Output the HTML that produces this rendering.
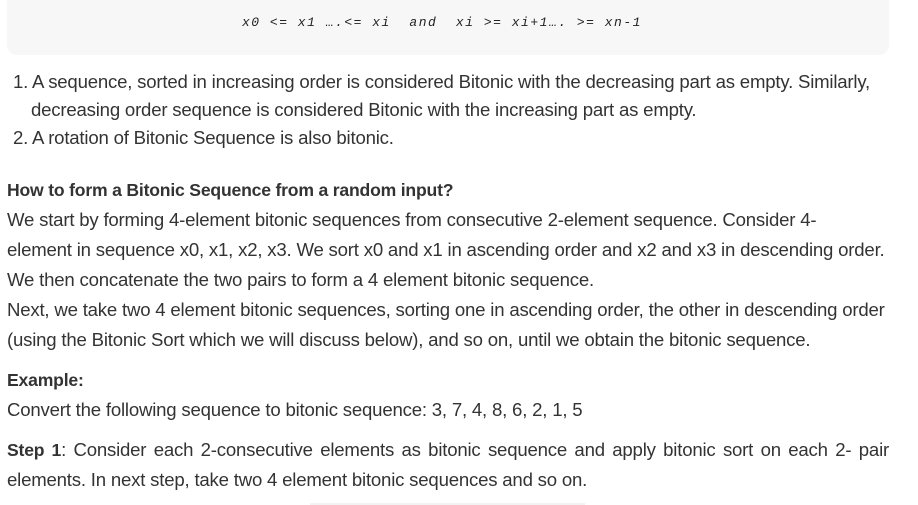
<!DOCTYPE html>
<html><head><meta charset="utf-8"><style>
body{margin:0;width:918px;height:505px;background:#fff;overflow:hidden;position:relative;font-family:"Liberation Sans",sans-serif;color:#333;}
.l{position:absolute;white-space:nowrap;font-size:18.6px;line-height:20px;letter-spacing:-0.2px;}
.code{position:absolute;left:7px;top:-10px;width:882px;height:65px;background:#f7f7f8;border-radius:10px;}
.mono{position:absolute;left:242px;top:15px;font-family:"Liberation Mono",monospace;font-style:italic;font-size:13px;letter-spacing:1.5px;color:#222;white-space:pre;}
b{font-weight:bold;color:#333;font-size:17.6px}
</style></head><body>
<div class="code"></div>
<div class="mono">x0 &lt;= x1 ….&lt;= xi  and  xi &gt;= xi+1…. &gt;= xn-1</div>
<div class="l" style="left:13px;top:72px">1. A sequence, sorted in increasing order is considered Bitonic with the decreasing part as empty. Similarly,</div>
<div class="l" style="left:31px;top:100px">decreasing order sequence is considered Bitonic with the increasing part as empty.</div>
<div class="l" style="left:13px;top:128px">2. A rotation of Bitonic Sequence is also bitonic.</div>
<div class="l" style="left:7px;top:180px"><b>How to form a Bitonic Sequence from a random input?</b></div>
<div class="l" style="left:7px;top:210px">We start by forming 4-element bitonic sequences from consecutive 2-element sequence. Consider 4-</div>
<div class="l" style="left:7px;top:240px">element in sequence x0, x1, x2, x3. We sort x0 and x1 in ascending order and x2 and x3 in descending order.</div>
<div class="l" style="left:7px;top:270px">We then concatenate the two pairs to form a 4 element bitonic sequence.</div>
<div class="l" style="left:7px;top:300px">Next, we take two 4 element bitonic sequences, sorting one in ascending order, the other in descending order</div>
<div class="l" style="left:7px;top:330px">(using the Bitonic Sort which we will discuss below), and so on, until we obtain the bitonic sequence.</div>
<div class="l" style="left:7px;top:370px"><b>Example:</b></div>
<div class="l" style="left:7px;top:400px">Convert the following sequence to bitonic sequence: 3, 7, 4, 8, 6, 2, 1, 5</div>
<div class="l" style="left:7px;top:440px;width:882px;white-space:normal;text-align:justify;text-align-last:justify"><b>Step 1</b>: Consider each 2-consecutive elements as bitonic sequence and apply bitonic sort on each 2- pair</div>
<div class="l" style="left:7px;top:470px">elements. In next step, take two 4 element bitonic sequences and so on.</div>
<div style="position:absolute;left:310px;top:503px;width:275px;height:2px;background:#f2f2f2"></div>
</body></html>
